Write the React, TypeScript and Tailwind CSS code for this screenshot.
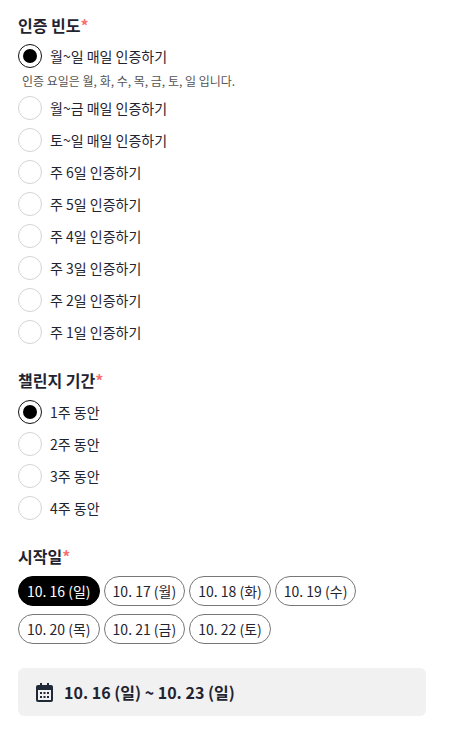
import React from 'react';

const frequencies = [
  '월~일 매일 인증하기',
  '월~금 매일 인증하기',
  '토~일 매일 인증하기',
  '주 6일 인증하기',
  '주 5일 인증하기',
  '주 4일 인증하기',
  '주 3일 인증하기',
  '주 2일 인증하기',
  '주 1일 인증하기',
];

const periods = ['1주 동안', '2주 동안', '3주 동안', '4주 동안'];

const dates = [
  '10. 16 (일)',
  '10. 17 (월)',
  '10. 18 (화)',
  '10. 19 (수)',
  '10. 20 (목)',
  '10. 21 (금)',
  '10. 22 (토)',
];

function Label({ text }: { text: string }) {
  return (
    <h2 className="h-[20px] text-[16px] leading-[20px] font-bold text-[#1f2430]">
      {text}
      <span className="text-[#f87171]">*</span>
    </h2>
  );
}

function Radio({ label, checked }: { label: string; checked?: boolean }) {
  return (
    <div className="flex items-center gap-2 h-[32px]">
      {checked ? (
        <span className="w-[24px] h-[24px] rounded-full border border-[#111] flex items-center justify-center">
          <span className="w-[14px] h-[14px] rounded-full bg-black" />
        </span>
      ) : (
        <span className="w-[24px] h-[24px] rounded-full border border-[#d4d4d4]" />
      )}
      <span className="text-[14px] leading-[20px] text-[#1f2430]">{label}</span>
    </div>
  );
}

export default function App() {
  return (
    <div className="w-[453px] h-[735px] bg-white overflow-hidden px-[18px] pt-[15px] font-['Noto_Sans_CJK_KR',sans-serif]">
      <Label text="인증 빈도" />
      <div className="mt-[5px]">
        {frequencies.map((f, i) => (
          <React.Fragment key={f}>
            <Radio label={f} checked={i === 0} />
            {i === 0 && (
              <p className="h-[18px] mb-[2px] pl-[4px] text-[12px] leading-[18px] text-[#555]">
                인증 요일은 월, 화, 수, 목, 금, 토, 일 입니다.
              </p>
            )}
          </React.Fragment>
        ))}
      </div>

      <div className="mt-[22px]">
        <Label text="챌린지 기간" />
        <div className="mt-[6px]">
          {periods.map((p, i) => (
            <Radio key={p} label={p} checked={i === 0} />
          ))}
        </div>
      </div>

      <div className="mt-[22px]">
        <Label text="시작일" />
        <div className="mt-[10px] flex flex-wrap gap-x-[4px] gap-y-[8px] w-[400px]">
          {dates.map((d, i) => (
            <span
              key={d}
              className={
                i === 0
                  ? 'h-[30px] px-[8px] rounded-full border border-black bg-black text-white text-[14px] leading-[28px]'
                  : 'h-[30px] px-[8px] rounded-full border border-[#777] bg-white text-[#1f2430] text-[14px] leading-[28px]'
              }
            >
              {d}
            </span>
          ))}
        </div>
      </div>

      <div className="mt-[24px] w-[408px] h-[48px] rounded-[6px] bg-[#f1f1f1] flex items-center gap-[11px] pl-[18px]">
        <svg width="17" height="19" viewBox="0 0 17 19" fill="#1f2937">
          <path d="M4 0h2v2h5V0h2v2h2a2 2 0 0 1 2 2v13a2 2 0 0 1-2 2H2a2 2 0 0 1-2-2V4a2 2 0 0 1 2-2h2V0Zm-2 7v10h13V7H2Z" />
          <path d="M4 9h2v2H4zM7.5 9h2v2h-2zM11 9h2v2h-2zM4 13h2v2H4zM7.5 13h2v2h-2zM11 13h2v2h-2z" />
        </svg>
        <span className="text-[16px] font-bold text-[#1f2430]">10. 16 (일) ~ 10. 23 (일)</span>
      </div>
    </div>
  );
}
